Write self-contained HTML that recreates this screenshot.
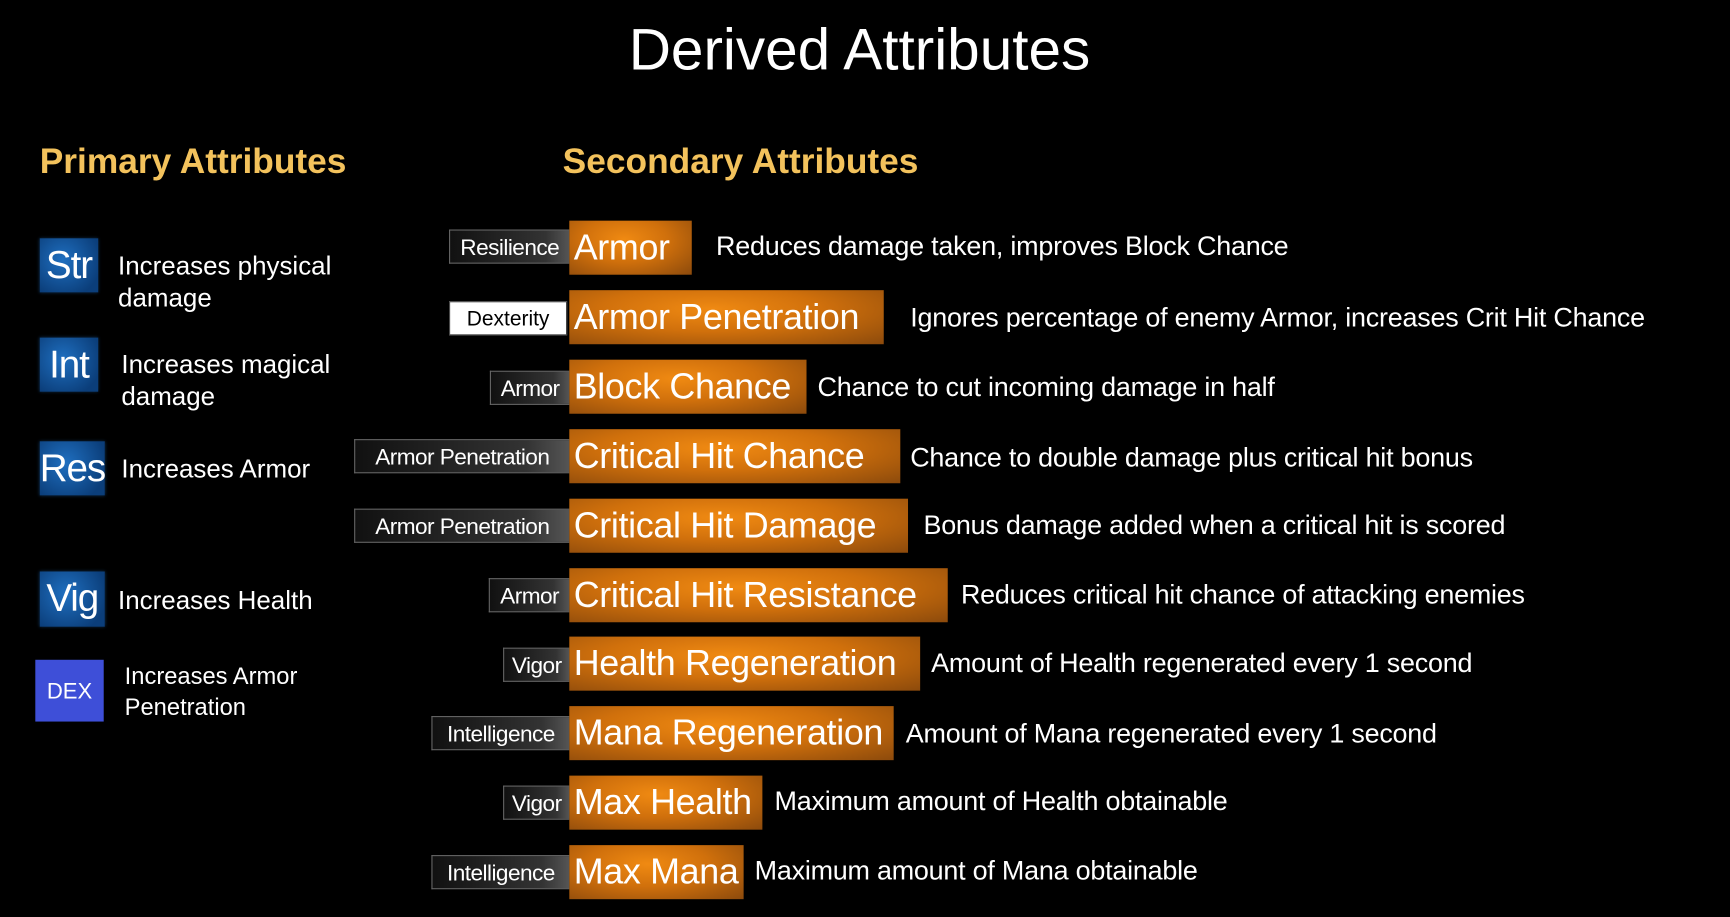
<!DOCTYPE html>
<html><head><meta charset="utf-8"><style>
html,body{margin:0;padding:0;background:#000;width:1730px;height:917px;overflow:hidden}
#w{position:absolute;left:0;top:0;width:1568px;height:831px;transform:scale(1.1033);transform-origin:0 0;font-family:"Liberation Sans","DejaVu Sans",sans-serif;color:#fff}
.a{position:absolute;white-space:nowrap}
.t{font-size:53px;left:0;width:1558px;text-align:center;top:15px}
.h{color:#f3c25c;font-weight:bold;font-size:32px;top:128px}
.ic{position:absolute;background:radial-gradient(circle at 40% 40%,#1f6fc0,#0b3e7a 80%);color:#fff;font-size:35px;line-height:49px;text-align:center;box-shadow:0 0 3px #135;letter-spacing:-1px}
.lt{font-size:23.5px;line-height:29px}
.ob{position:absolute;left:516px;height:49px;background:radial-gradient(ellipse at 45% 35%,#f08a12 0%,#d0700c 45%,#8c4a0c 100%);font-size:32.5px;line-height:49px;padding-left:4px;box-sizing:border-box;white-space:nowrap;letter-spacing:-0.3px}
.lb{position:absolute;height:31px;line-height:31px;font-size:20.5px;background:linear-gradient(90deg,#111,#333 80%,#555);border:1px solid #666;border-right:none;box-sizing:border-box;text-align:center;white-space:nowrap;letter-spacing:-0.5px}
.d{position:absolute;font-size:24.4px;line-height:49px;white-space:nowrap;letter-spacing:-0.2px}
</style></head><body><div id="w">
<div class="a t">Derived Attributes</div>
<div class="a h" style="left:36px">Primary Attributes</div>
<div class="a h" style="left:510px">Secondary Attributes</div>

<div class="ic" style="left:36px;top:216px;width:53px;height:49px">Str</div>
<div class="a lt" style="left:107px;top:227px">Increases physical<br>damage</div>
<div class="ic" style="left:36px;top:306px;width:53px;height:49px">Int</div>
<div class="a lt" style="left:110px;top:316px">Increases magical<br>damage</div>
<div class="ic" style="left:36px;top:400px;width:59px;height:49px">Res</div>
<div class="a lt" style="left:110px;top:411px">Increases Armor</div>
<div class="ic" style="left:36px;top:518px;width:59px;height:50px">Vig</div>
<div class="a lt" style="left:107px;top:530px">Increases Health</div>
<div class="ic" style="left:32px;top:598px;width:62px;height:56px;background:#3e4fd8;box-shadow:none;font-size:20px;line-height:58px;letter-spacing:0">DEX</div>
<div class="a" style="left:113px;top:599px;font-size:21.5px;line-height:28px">Increases Armor<br>Penetration</div>

<div class="lb" style="left:407px;top:208px;width:109px">Resilience</div>
<div class="ob" style="top:200px;width:111px">Armor</div>
<div class="d" style="left:649px;top:199px">Reduces damage taken, improves Block Chance</div>

<div class="lb" style="left:407px;top:273px;width:107px;background:#fff;color:#000;border:1px solid #444;font-size:19px;letter-spacing:0">Dexterity</div>
<div class="ob" style="top:263px;width:285px">Armor Penetration</div>
<div class="d" style="left:825px;top:264px">Ignores percentage of enemy Armor, increases Crit Hit Chance</div>

<div class="lb" style="left:444px;top:336px;width:72px">Armor</div>
<div class="ob" style="top:326px;width:215px">Block Chance</div>
<div class="d" style="left:741px;top:327px">Chance to cut incoming damage in half</div>

<div class="lb" style="left:321px;top:398px;width:195px">Armor Penetration</div>
<div class="ob" style="top:389px;width:300px">Critical Hit Chance</div>
<div class="d" style="left:825px;top:391px">Chance to double damage plus critical hit bonus</div>

<div class="lb" style="left:321px;top:461px;width:195px">Armor Penetration</div>
<div class="ob" style="top:452px;width:307px">Critical Hit Damage</div>
<div class="d" style="left:837px;top:452px">Bonus damage added when a critical hit is scored</div>

<div class="lb" style="left:443px;top:524px;width:73px">Armor</div>
<div class="ob" style="top:515px;width:343px">Critical Hit Resistance</div>
<div class="d" style="left:871px;top:515px">Reduces critical hit chance of attacking enemies</div>

<div class="lb" style="left:456px;top:587px;width:60px">Vigor</div>
<div class="ob" style="top:577px;width:318px">Health Regeneration</div>
<div class="d" style="left:844px;top:577px">Amount of Health regenerated every 1 second</div>

<div class="lb" style="left:391px;top:649px;width:125px">Intelligence</div>
<div class="ob" style="top:640px;width:294px">Mana Regeneration</div>
<div class="d" style="left:821px;top:641px">Amount of Mana regenerated every 1 second</div>

<div class="lb" style="left:456px;top:712px;width:60px">Vigor</div>
<div class="ob" style="top:703px;width:175px">Max Health</div>
<div class="d" style="left:702px;top:702px">Maximum amount of Health obtainable</div>

<div class="lb" style="left:391px;top:775px;width:125px">Intelligence</div>
<div class="ob" style="top:766px;width:158px">Max Mana</div>
<div class="d" style="left:684px;top:765px">Maximum amount of Mana obtainable</div>
</div></body></html>
